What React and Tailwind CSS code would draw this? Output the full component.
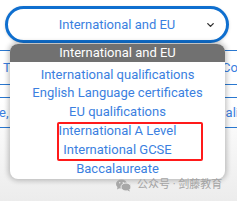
import { FiChevronDown } from 'react-icons/fi'

const options = [
  'International qualifications',
  'English Language certificates',
  'EU qualifications',
  'International A Level',
  'International GCSE',
  'Baccalaureate',
]

function WeChatIcon() {
  return (
    <svg width="15" height="13" viewBox="0 0 30 26" fill="#a8a8a8">
      <ellipse cx="11" cy="10" rx="11" ry="9" />
      <path d="M3 16 L2 21 L8 18 Z" />
      <ellipse cx="20" cy="16" rx="10" ry="8" fill="#a8a8a8" stroke="#ededed" strokeWidth="2" />
      <path d="M26 21 L28 25 L23 23 Z" />
      <circle cx="7.5" cy="7.5" r="1.4" fill="#ededed" />
      <circle cx="14.5" cy="7.5" r="1.4" fill="#ededed" />
    </svg>
  )
}

export default function App() {
  return (
    <div
      className="relative w-[237px] h-[201px] overflow-hidden bg-gradient-to-b from-white via-white to-[#ececec]"
      style={{ fontFamily: 'Roboto, "Noto Sans CJK SC", sans-serif' }}
    >
      {/* Select */}
      <div className="pt-[6px] px-[5px]">
        <div className="relative h-[37px] w-[224px] rounded-full border-[3px] border-[#0f6fcf] bg-white flex items-center justify-center shadow-[0_1px_3px_rgba(0,0,0,0.15)]">
          <span className="text-[13px] text-[#3b7fe0] leading-none">International and EU</span>
          <FiChevronDown className="absolute right-[10px] top-1/2 -translate-y-1/2 w-[11px] h-[11px] text-[#333]" strokeWidth={3} />
        </div>
      </div>

      {/* Table behind the menu */}
      <div className="mt-[7px] text-[13px] text-[#3b7fe0]">
        <div className="border-t border-[#2a78d0] h-[34px] flex items-center justify-between">
          <span className="pl-[3px]">T</span>
          <span className="-mr-[1px]">Co</span>
        </div>
        <div className="border-t border-[#2a78d0] h-[13px]" />
        <div className="border-t border-[#2a78d0] h-[30px] flex items-center justify-between">
          <span className="-ml-[1px]">e,</span>
          <span className="-mr-[2px]">ali</span>
        </div>
        <div className="border-t border-[#2a78d0]" />
      </div>

      {/* Dropdown menu */}
      <div className="absolute left-[10px] top-[44px] w-[215px] rounded-[8px] bg-white overflow-hidden shadow-[0_0_5px_2px_rgba(0,0,0,0.22)]">
        <div className="h-[18px] bg-[#717171] text-white text-[13px] flex items-center justify-center">
          International and EU
        </div>
        <ul className="pt-[3px] pb-[1px]">
          {options.map((o) => (
            <li key={o} className="h-[18.8px] flex items-center justify-center text-[13px] text-[#3b7fe0]">
              {o}
            </li>
          ))}
        </ul>
      </div>

      {/* Highlight box */}
      <div className="absolute left-[57px] top-[122px] w-[146px] h-[39px] border-2 border-[#ff1a1a] rounded-[2px]" />

      {/* Watermark */}
      <div className="absolute left-[116px] top-[177px] flex items-center gap-[6px] text-[11px] text-[#a4a4a4]">
        <WeChatIcon />
        <span>公众号 · 剑藤教育</span>
      </div>
    </div>
  )
}
